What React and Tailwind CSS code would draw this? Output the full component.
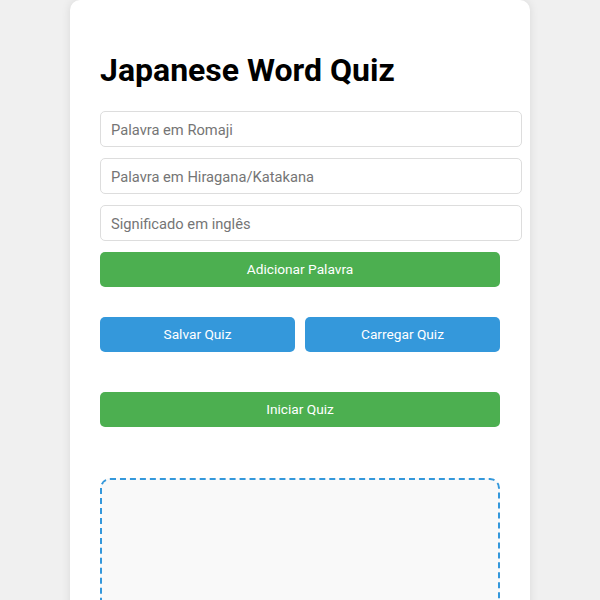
export default function App() {
  return (
    <div className="min-h-screen bg-[#f0f0f0] flex justify-center font-['Roboto',sans-serif]">
      <div className="w-[460px] bg-white rounded-[10px] shadow-[0_0_10px_rgba(0,0,0,0.1)] px-[30px] pt-[30px] pb-[30px]">
        <h1 className="text-[32px] font-bold text-black leading-[37.5px] my-[21.5px]">
          Japanese Word Quiz
        </h1>

        <div className="flex flex-col gap-[11px]">
          <input
            placeholder="Palavra em Romaji"
            className="w-[422px] h-[36px] px-[10px] pt-[2px] border border-[#ddd] rounded-[5px] text-[14.7px] text-black placeholder:text-[#757575] outline-none"
          />
          <input
            placeholder="Palavra em Hiragana/Katakana"
            className="w-[422px] h-[36px] px-[10px] pt-[2px] border border-[#ddd] rounded-[5px] text-[14.7px] text-black placeholder:text-[#757575] outline-none"
          />
          <input
            placeholder="Significado em inglês"
            className="w-[422px] h-[36px] px-[10px] pt-[2px] border border-[#ddd] rounded-[5px] text-[14.7px] text-black placeholder:text-[#757575] outline-none"
          />
          <button className="w-[400px] h-[35px] pt-px bg-[#4caf50] text-white text-[13.7px] rounded-[5px]">
            Adicionar Palavra
          </button>
        </div>

        <div className="flex gap-[10px] mt-[30px] w-[400px]">
          <button className="flex-1 h-[35px] pt-px bg-[#3498db] text-white text-[13.7px] rounded-[5px]">
            Salvar Quiz
          </button>
          <button className="flex-1 h-[35px] pt-px bg-[#3498db] text-white text-[13.7px] rounded-[5px]">
            Carregar Quiz
          </button>
        </div>

        <button className="mt-[40px] w-[400px] h-[35px] pt-px bg-[#4caf50] text-white text-[13.7px] rounded-[5px]">
          Iniciar Quiz
        </button>

        <div className="mt-[51px] w-[400px] h-[200px] bg-[#f9f9f9] border-2 border-dashed border-[#3498db] rounded-[10px]"></div>
      </div>
    </div>
  );
}
